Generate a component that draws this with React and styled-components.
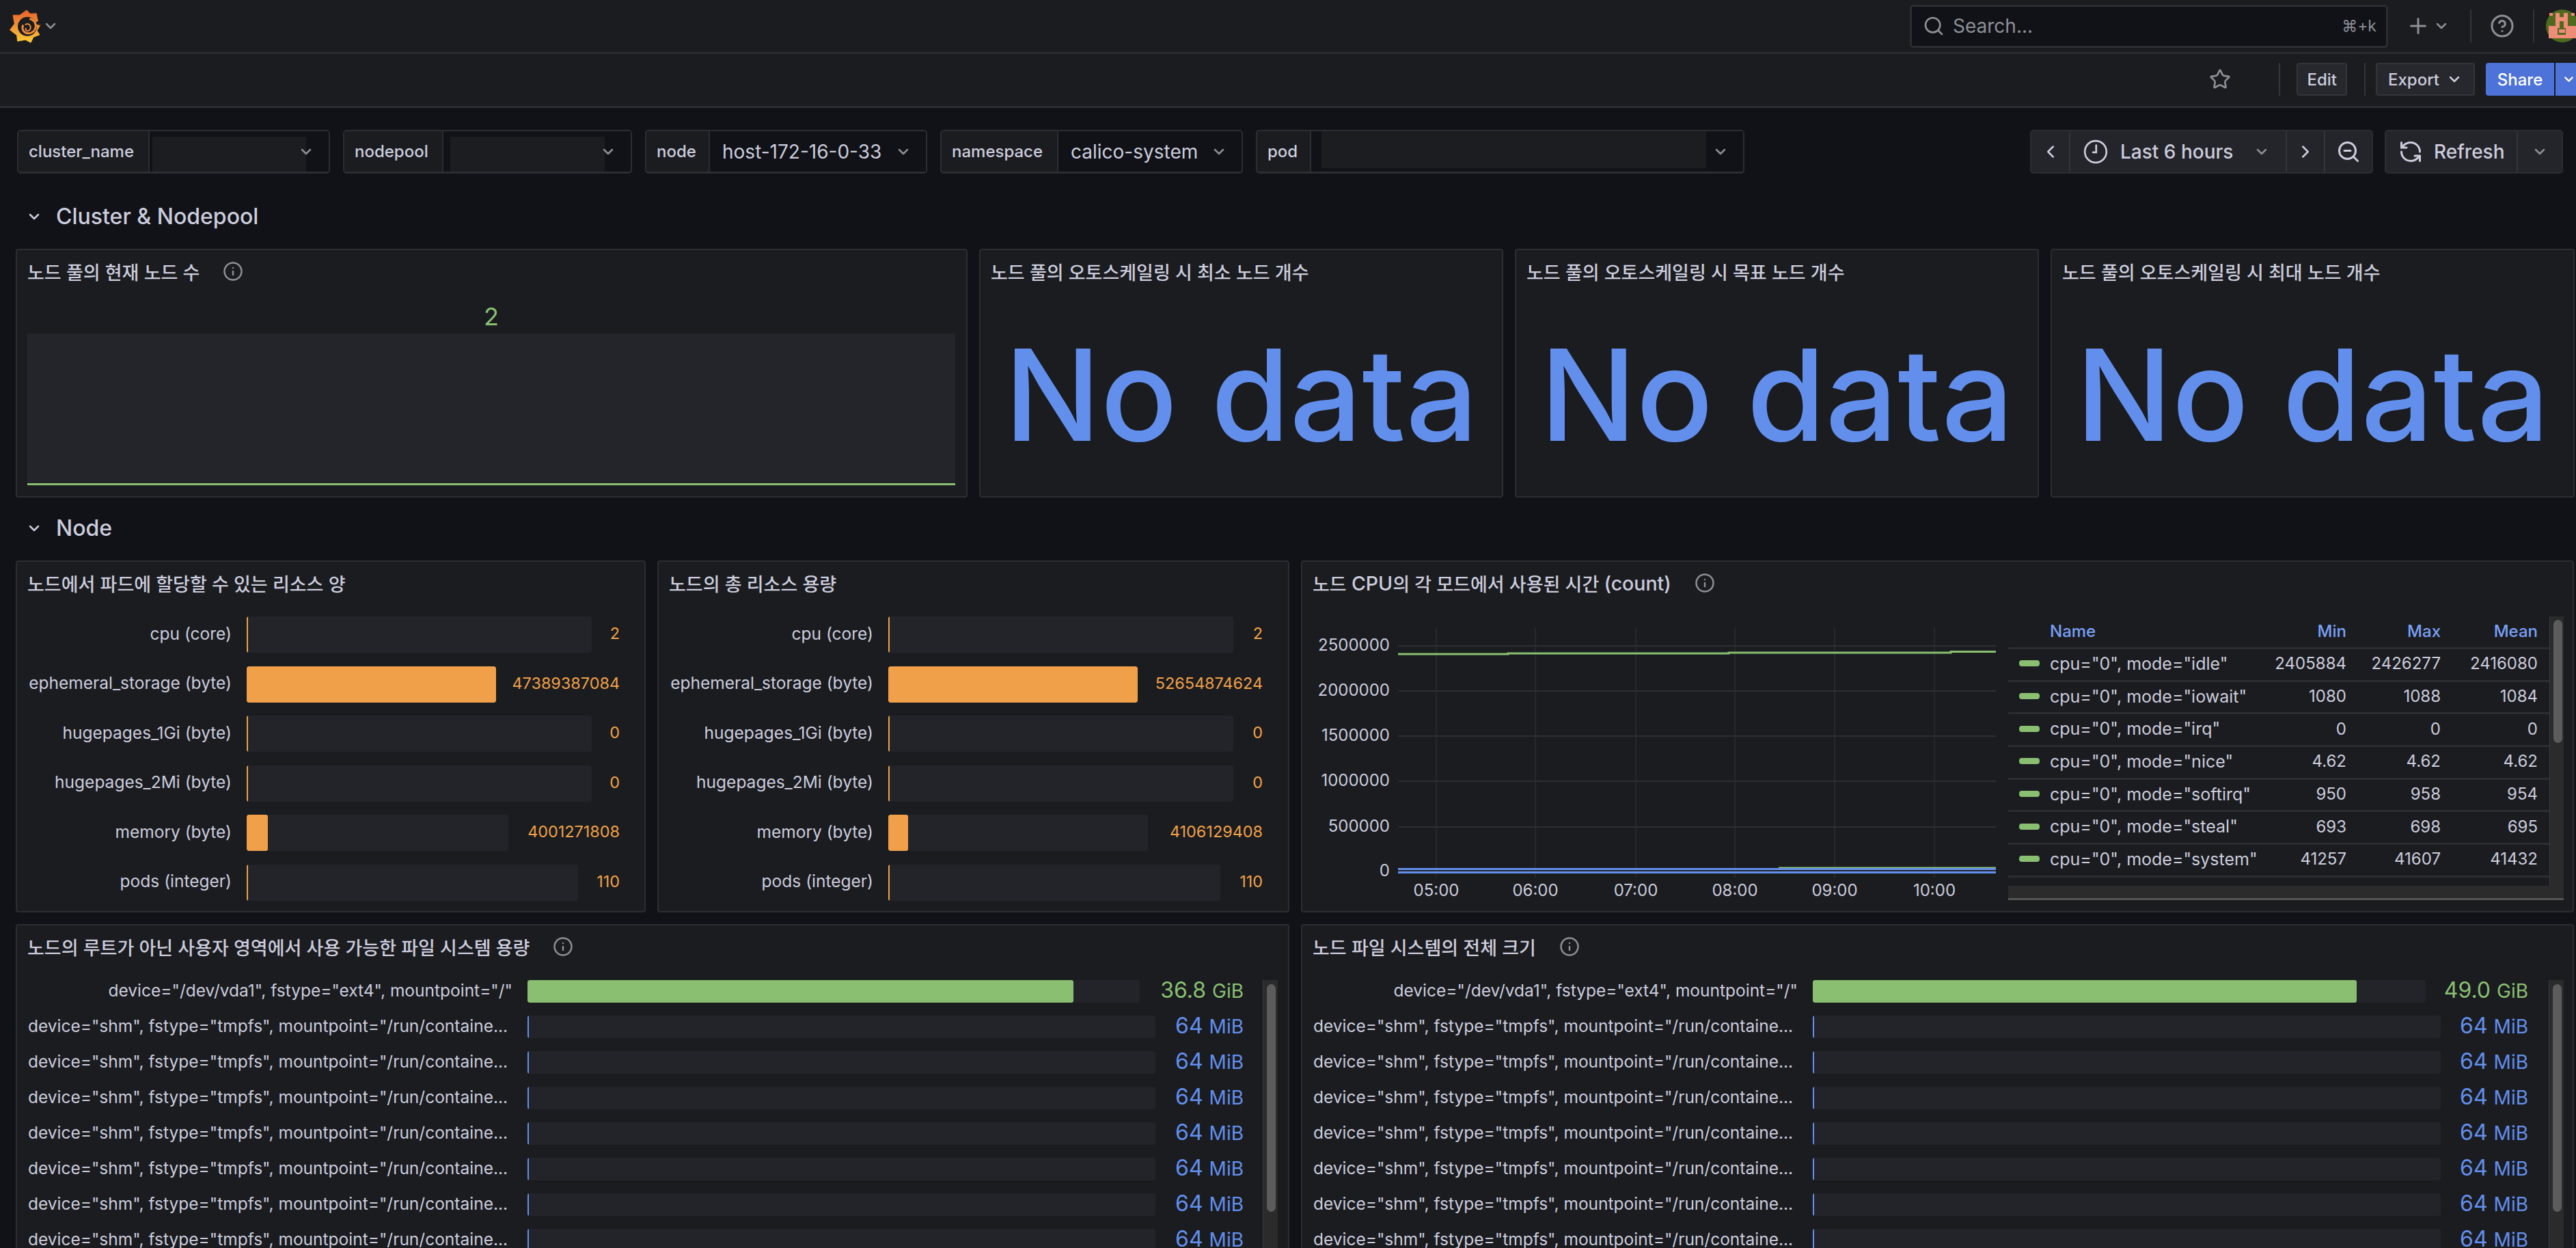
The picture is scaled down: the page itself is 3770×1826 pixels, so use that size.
import React from "react";
import styled, { createGlobalStyle } from "styled-components";
import {
  ChevronDown,
  ChevronLeft,
  ChevronRight,
  CircleHelp,
  Info,
  Plus,
  RefreshCcw,
  Search,
  Star,
  ZoomOut,
} from "lucide-react";

const text = "#ccccdc";
const muted = "#8e8e96";
const line = "#2b2d32";
const panelBg = "#1a1c20";
const canvas = "#101217";
const orange = "#f0a048";
const green = "#8abf72";
const blue = "#638fec";

const GlobalStyle = createGlobalStyle`
  html, body {
    margin: 0;
    background: ${canvas};
    overflow: hidden;
  }
  * {
    box-sizing: border-box;
  }
  body {
    font-family: Inter, "Noto Sans CJK KR", "DejaVu Sans", sans-serif;
    color: ${text};
  }
`;

const Page = styled.div`
  width: 3770px;
  height: 1826px;
  overflow: hidden;
`;

const TopNav = styled.header`
  height: 79px;
  display: flex;
  align-items: center;
  background: ${panelBg};
  border-bottom: 3px solid ${line};
  padding-left: 14px;
`;

const Caret = styled(ChevronDown)`
  color: ${(p) => p.$color || muted};
  flex-shrink: 0;
`;

const LogoCaret = styled(Caret)`
  margin-left: 2px;
`;

const SelectCaret = styled(Caret)`
  margin-left: auto;
`;

const SearchBox = styled.div`
  width: 700px;
  height: 63px;
  margin-left: auto;
  display: flex;
  align-items: center;
  background: ${canvas};
  border: 3px solid ${line};
  border-radius: 5px;
  padding: 0 14px 0 16px;
  color: ${muted};
  font-size: 28px;
`;

const SearchHint = styled.span`
  margin-left: auto;
  font-size: 23px;
`;

const SearchLabel = styled.span`
  margin-left: 12px;
`;

const NavIcons = styled.div`
  display: flex;
  align-items: center;
  color: ${muted};
  margin-right: -4px;
`;

const AddIcon = styled(Plus)`
  margin-left: 26px;
`;

const AddCaret = styled(Caret)`
  margin-left: 4px;
`;

const VDivider = styled.span`
  width: 2px;
  height: 48px;
  background: #33353a;
  margin-left: ${(p) => p.$left}px;
  margin-right: ${(p) => p.$right}px;
  flex-shrink: 0;
`;

const Toolbar = styled.div`
  height: 79px;
  display: flex;
  align-items: center;
  justify-content: flex-end;
  background: ${panelBg};
  border-bottom: 3px solid ${line};
  padding-bottom: 2px;
  color: ${muted};
`;

const ToolButton = styled.button`
  height: 48px;
  display: flex;
  align-items: center;
  gap: 10px;
  padding: 0 ${(p) => p.$pad || 18}px;
  font: 500 24px Inter, sans-serif;
  color: ${text};
  background: #26282d;
  border: 2px solid #33353a;
  border-radius: 4px;
`;

const ShareButton = styled.button`
  height: 48px;
  width: 100px;
  margin-left: 16px;
  font: 500 24px Inter, sans-serif;
  color: #fff;
  background: #4d72d8;
  border: none;
  border-radius: 4px 0 0 4px;
`;

const ShareCaret = styled.button`
  height: 48px;
  width: 30px;
  margin-left: 2px;
  padding: 0 0 0 9px;
  display: flex;
  align-items: center;
  color: #fff;
  background: #4d72d8;
  border: none;
`;

const Filters = styled.div`
  display: flex;
  align-items: center;
  height: 64px;
  margin-top: 32px;
  padding: 0 19px 0 25px;
`;

const Variable = styled.div`
  height: 64px;
  width: ${(p) => p.$width}px;
  margin-right: 19px;
  display: flex;
  border: 2px solid ${line};
  border-bottom-width: 3px;
  border-radius: 5px;
  overflow: hidden;
`;

const VarLabel = styled.label`
  width: ${(p) => p.$width}px;
  display: flex;
  align-items: center;
  padding-left: 15px;
  flex-shrink: 0;
  font-size: 24px;
  font-weight: 500;
  background: ${panelBg};
  border-right: 2px solid ${line};
`;

const VarSelect = styled.div`
  flex: 1;
  display: flex;
  align-items: center;
  justify-content: space-between;
  padding: 0 21px 0 18px;
  background: ${canvas};
  font-size: 28px;
  white-space: nowrap;
`;

const EmptySelect = styled.div`
  flex: 1;
  display: flex;
  align-items: center;
  background: ${canvas};
  padding-right: 21px;
`;

const EmptyValue = styled.div`
  width: ${(p) => p.$width}px;
  height: 54px;
  flex-shrink: 0;
  margin: ${(p) => p.$top}px -20px 0 ${(p) => p.$left}px;
  align-self: flex-start;
  background: #1b1d21;
`;

const TimeControls = styled.div`
  margin-left: auto;
  display: flex;
`;

const ButtonGroup = styled.div`
  display: flex;
  height: 64px;
  margin-left: ${(p) => p.$gap || 0}px;
  background: #23252a;
  border: 2px solid ${line};
  border-radius: 5px;
`;

const GroupCell = styled.div`
  width: ${(p) => p.$width}px;
  display: flex;
  align-items: center;
  justify-content: ${(p) => (p.$spread ? "flex-start" : "center")};
  padding-left: ${(p) => (p.$spread ? 18 : 0)}px;
  border-left: ${(p) => (p.$first ? "none" : `2px solid #33353a`)};
  font-size: 28px;
  font-weight: 500;
`;

const TimeLabel = styled.span`
  margin: 0 30px 0 17px;
  white-space: nowrap;
`;

const RefreshLabel = styled.span`
  margin-left: 16px;
`;

const ClockIcon = () => (
  <svg width="38" height="38" viewBox="0 0 24 24" fill="none" stroke="currentColor" strokeWidth="1.7" strokeLinecap="round">
    <circle cx="12" cy="12" r="10" />
    <path d="M12.5 6v6.5H9.5" />
  </svg>
);

const SectionRow = styled.div`
  height: 92px;
  margin-top: ${(p) => p.$top}px;
  padding: 0 0 3px 38px;
  display: flex;
  align-items: center;
  gap: 20px;
  font-size: 32px;
  font-weight: 500;
`;

const PanelGrid = styled.div`
  display: grid;
  grid-template-columns: ${(p) => p.$columns};
  gap: 17px;
  padding-left: 23px;
  margin-bottom: 17px;
`;

const Panel = styled.section`
  height: ${(p) => p.$height}px;
  display: flex;
  flex-direction: column;
  background: ${panelBg};
  border: 2px solid ${line};
  border-radius: 4px;
`;

const PanelTitle = styled.h2`
  height: 66px;
  margin: 0;
  flex-shrink: 0;
  padding: 0 0 4px 15px;
  display: flex;
  align-items: center;
  font-size: 27px;
  font-weight: 500;
  white-space: pre;
`;

const TitleLatin = styled.span`
  font-size: 28.5px;
`;

const InfoIcon = styled(Info)`
  color: ${muted};
  margin-left: 34px;
`;

const StatBody = styled.div`
  flex: 1;
  display: flex;
  flex-direction: column;
  align-items: stretch;
  padding: 0 16px 14px 15px;
`;

const StatValue = styled.div`
  height: 56px;
  padding-top: 5px;
  display: flex;
  align-items: center;
  justify-content: center;
  font-size: 36px;
  color: ${green};
`;

const Sparkline = styled.div`
  flex: 1;
  background: #23252a;
  border-bottom: 3px solid ${green};
  margin-bottom: 2px;
`;

const NoData = styled.div`
  flex: 1;
  display: flex;
  align-items: center;
  justify-content: center;
  font-size: 186px;
  font-weight: 500;
  color: ${blue};
  white-space: nowrap;
  padding-bottom: 4px;
`;

const GaugeList = styled.div`
  margin-top: 14px;
  display: flex;
  flex-direction: column;
  gap: ${(p) => p.$gap}px;
  padding-left: 15px;
  flex: 1;
  min-width: 0;
`;

const GaugeRow = styled.div`
  height: ${(p) => p.$height}px;
  display: flex;
  align-items: center;
  flex-shrink: 0;
  padding-right: ${(p) => p.$right}px;
`;

const GaugeLabel = styled.div`
  width: ${(p) => p.$width}px;
  flex-shrink: 0;
  text-align: right;
  font-size: 24.5px;
  padding-bottom: 4px;
  overflow: hidden;
  white-space: nowrap;
`;

const Track = styled.div`
  height: 100%;
  margin-left: 22px;
  flex-shrink: 0;
  background: #22242a;
  border-radius: 3px;
  overflow: hidden;
`;

const Fill = styled.div`
  height: 100%;
  border-radius: 3px;
  background: ${(p) => p.$color};
`;

const GaugeValue = styled.div`
  flex: 1;
  text-align: right;
  white-space: nowrap;
  padding-bottom: 4px;
  font-size: ${(p) => p.$size}px;
  color: ${(p) => p.$color};
`;

const Unit = styled.span`
  font-size: 28px;
`;

const ChartBody = styled.div`
  margin-top: 14px;
  display: flex;
  flex: 1;
  min-height: 0;
`;

const Chart = styled.svg`
  width: 1033px;
  height: 428px;
  flex-shrink: 0;
  text {
    font: 24px Inter, sans-serif;
    fill: ${text};
  }
`;

const LegendBox = styled.div`
  width: 813px;
  height: 415px;
  display: grid;
  grid-template-columns: 792px 21px;
  grid-template-rows: 394px 21px;
`;

const LegendTable = styled.div`
  overflow: hidden;
  font-size: 24px;
`;

const LegendLine = styled.div`
  height: ${(p) => p.$height}px;
  display: grid;
  grid-template-columns: 61px 314px 120px 138px 142px 17px;
  align-items: center;
  padding-bottom: 3px;
  border-bottom: 3px solid ${line};
  white-space: nowrap;
  color: ${(p) => p.$color || text};
  font-weight: ${(p) => p.$weight || 400};
`;

const Marker = styled.i`
  display: block;
  width: 30px;
  height: 9px;
  margin-left: 16px;
  border-radius: 4px;
  background: ${green};
`;

const SeriesName = styled.span`
  font-size: 25px;
`;

const NumCell = styled.span`
  text-align: right;
`;

const ScrollTrack = styled.div`
  background: #2b2b2b;
  padding: ${(p) => p.$pad};
  border-left: 1px solid #3a3a3a;
  flex-shrink: 0;
`;

const ScrollThumb = styled.div`
  width: 13px;
  height: ${(p) => p.$height}px;
  margin-left: 5px;
  background: #5c5c5c;
  border-radius: 7px;
`;

const HorizontalTrack = styled.div`
  grid-column: 1 / 3;
  background: #2b2b2b;
  border-bottom: 3px solid #555;
`;

const ScrollArea = styled.div`
  display: flex;
  flex: 1;
  min-height: 0;
  padding-right: ${(p) => p.$right}px;
`;

const FsScroll = styled(ScrollTrack)`
  width: 22px;
  margin-top: 14px;
`;

const Logo = () => (
  <svg width="46" height="49" viewBox="40 38 138 146">
    <defs>
      <linearGradient id="grafana" x1="0" y1="0" x2="0" y2="1">
        <stop offset="0" stopColor="#e8602e" />
        <stop offset="1" stopColor="#fbca36" />
      </linearGradient>
    </defs>
    <path
      d="M115 40L130 56L158 55L162 80L175 105L160 130L172 148L145 158L133 182L110 170L75 176L72 150L42 127L62 100L55 62L85 62Z"
      fill="url(#grafana)"
      stroke="url(#grafana)"
      strokeWidth="3"
      strokeLinejoin="round"
    />
    <circle cx="118" cy="112" r="42" fill={panelBg} />
    <path d="M150 98L176 108L170 84Z" fill={panelBg} />
    <path d="M128 78C165 84 165 140 122 142C100 142 92 120 100 105" fill="none" stroke="#ee8a38" strokeWidth="9" />
    <path d="M108 104C125 90 144 118 124 130C114 134 108 126 112 118" fill="none" stroke="#ee8a38" strokeWidth="6" />
  </svg>
);

const Avatar = () => (
  <svg width="48" height="48" viewBox="0 0 48 48">
    <circle cx="24" cy="24" r="24" fill="#4f6a1f" />
    <g fill="#ee8c78">
      <rect x="5" y="5" width="5" height="4" />
      <rect x="37" y="5" width="5" height="4" />
      <rect x="14" y="5" width="6" height="22" />
      <rect x="26" y="5" width="6" height="22" />
      <rect x="14" y="11" width="18" height="6" />
      <rect x="4" y="24" width="13" height="18" />
      <rect x="29" y="24" width="15" height="18" />
      <rect x="19" y="29" width="9" height="5" />
      <rect x="14" y="37" width="18" height="5" />
    </g>
  </svg>
);

const allocatable = [
  { name: "cpu (core)", value: "2", track: 505, fill: 2 },
  { name: "ephemeral_storage (byte)", value: "47389387084", track: 365, fill: 365 },
  { name: "hugepages_1Gi (byte)", value: "0", track: 505, fill: 2 },
  { name: "hugepages_2Mi (byte)", value: "0", track: 505, fill: 2 },
  { name: "memory (byte)", value: "4001271808", track: 383, fill: 31 },
  { name: "pods (integer)", value: "110", track: 485, fill: 2 },
];

const capacity = [
  { name: "cpu (core)", value: "2", track: 505, fill: 2 },
  { name: "ephemeral_storage (byte)", value: "52654874624", track: 365, fill: 365 },
  { name: "hugepages_1Gi (byte)", value: "0", track: 505, fill: 2 },
  { name: "hugepages_2Mi (byte)", value: "0", track: 505, fill: 2 },
  { name: "memory (byte)", value: "4106129408", track: 380, fill: 29 },
  { name: "pods (integer)", value: "110", track: 486, fill: 2 },
];

const legend = [
  ['cpu="0", mode="idle"', "2405884", "2426277", "2416080"],
  ['cpu="0", mode="iowait"', "1080", "1088", "1084"],
  ['cpu="0", mode="irq"', "0", "0", "0"],
  ['cpu="0", mode="nice"', "4.62", "4.62", "4.62"],
  ['cpu="0", mode="softirq"', "950", "958", "954"],
  ['cpu="0", mode="steal"', "693", "698", "695"],
  ['cpu="0", mode="system"', "41257", "41607", "41432"],
];

const shmLabel = 'device="shm", fstype="tmpfs", mountpoint="/run/containe...';
const yTicks = [
  ["2500000", 43],
  ["2000000", 109],
  ["1500000", 175],
  ["1000000", 241],
  ["500000", 308],
  ["0", 373],
];
const xTicks = [
  ["05:00", 196],
  ["06:00", 341],
  ["07:00", 488],
  ["08:00", 633],
  ["09:00", 779],
  ["10:00", 925],
];

function ResourcePanel({ title, rows, right }) {
  return (
    <Panel $height={515}>
      <PanelTitle>{title}</PanelTitle>
      <GaugeList $gap={19.6}>
        {rows.map((row) => (
          <GaugeRow key={row.name} $height={53} $right={right}>
            <GaugeLabel $width={299}>{row.name}</GaugeLabel>
            <Track style={{ width: row.track }}>
              <Fill $color={orange} style={{ width: row.fill }} />
            </Track>
            <GaugeValue $size={23.4} $color={orange}>{row.value}</GaugeValue>
          </GaugeRow>
        ))}
      </GaugeList>
    </Panel>
  );
}

function FsPanel({ title, value, firstTrack, firstFill, right, scrollRight }) {
  const shm = Array.from({ length: 7 }, (_, i) => i);
  return (
    <Panel $height={500}>
      <PanelTitle>
        {title}
        <InfoIcon size={30} />
      </PanelTitle>
      <ScrollArea $right={scrollRight}>
        <GaugeList $gap={19}>
          <GaugeRow $height={33} $right={right}>
            <GaugeLabel $width={710}>device="/dev/vda1", fstype="ext4", mountpoint="/"</GaugeLabel>
            <Track style={{ width: firstTrack }}>
              <Fill $color={green} style={{ width: firstFill }} />
            </Track>
            <GaugeValue $size={32} $color={green}>
              {value} <Unit>GiB</Unit>
            </GaugeValue>
          </GaugeRow>
          {shm.map((i) => (
            <GaugeRow key={i} $height={33} $right={right}>
              <GaugeLabel $width={710}>{shmLabel}&nbsp;</GaugeLabel>
              <Track style={{ width: 919 }}>
                <Fill $color={blue} style={{ width: 2 }} />
              </Track>
              <GaugeValue $size={32} $color={blue}>
                64 <Unit>MiB</Unit>
              </GaugeValue>
            </GaugeRow>
          ))}
        </GaugeList>
        <FsScroll $pad="6px 0 0">
          <ScrollThumb $height={333} />
        </FsScroll>
      </ScrollArea>
    </Panel>
  );
}

export default function App() {
  return (
    <Page>
      <GlobalStyle />
      <TopNav>
        <Logo />
        <LogoCaret size={24} strokeWidth={2.5} />
        <SearchBox>
          <Search size={32} strokeWidth={2} />
          <SearchLabel>Search...</SearchLabel>
          <SearchHint>⌘+k</SearchHint>
        </SearchBox>
        <NavIcons>
          <AddIcon size={36} strokeWidth={2} />
          <AddCaret size={24} strokeWidth={2.5} />
          <VDivider $left={30} $right={27} />
          <CircleHelp size={36} strokeWidth={2} />
          <VDivider $left={27} $right={17} />
          <Avatar />
        </NavIcons>
      </TopNav>
      <Toolbar>
        <Star size={32} strokeWidth={2} />
        <VDivider $left={70} $right={24} />
        <ToolButton $pad={13}>Edit</ToolButton>
        <VDivider $left={25} $right={15} />
        <ToolButton $pad={16}>
          Export
          <Caret size={24} strokeWidth={2.5} $color={text} />
        </ToolButton>
        <ShareButton>Share</ShareButton>
        <ShareCaret>
          <ChevronDown size={24} strokeWidth={2.5} />
        </ShareCaret>
      </Toolbar>

      <Filters>
        <Variable $width={458}>
          <VarLabel $width={192}>cluster_name</VarLabel>
          <EmptySelect>
            <EmptyValue $width={225} $left={4} $top={8} />
            <SelectCaret size={24} strokeWidth={2.5} />
          </EmptySelect>
        </Variable>
        <Variable $width={423}>
          <VarLabel $width={145}>nodepool</VarLabel>
          <EmptySelect>
            <EmptyValue $width={226} $left={10} $top={8} />
            <SelectCaret size={24} strokeWidth={2.5} />
          </EmptySelect>
        </Variable>
        <Variable $width={413}>
          <VarLabel $width={93}>node</VarLabel>
          <VarSelect>
            host-172-16-0-33
            <Caret size={24} strokeWidth={2.5} />
          </VarSelect>
        </Variable>
        <Variable $width={443}>
          <VarLabel $width={171}>namespace</VarLabel>
          <VarSelect>
            calico-system
            <Caret size={24} strokeWidth={2.5} />
          </VarSelect>
        </Variable>
        <Variable $width={715}>
          <VarLabel $width={79}>pod</VarLabel>
          <EmptySelect>
            <EmptyValue $width={563} $left={15} $top={0} />
            <SelectCaret size={24} strokeWidth={2.5} />
          </EmptySelect>
        </Variable>
        <TimeControls>
          <ButtonGroup>
            <GroupCell $first $width={55}>
              <ChevronLeft size={30} strokeWidth={2} />
            </GroupCell>
            <GroupCell $spread $width={317}>
              <ClockIcon />
              <TimeLabel>Last 6 hours</TimeLabel>
              <Caret size={24} strokeWidth={2.5} />
            </GroupCell>
            <GroupCell $width={56}>
              <ChevronRight size={30} strokeWidth={2} />
            </GroupCell>
            <GroupCell $width={70}>
              <ZoomOut size={36} strokeWidth={2} />
            </GroupCell>
          </ButtonGroup>
          <ButtonGroup $gap={17}>
            <GroupCell $first $spread $width={191}>
              <RefreshCcw size={36} strokeWidth={2} />
              <RefreshLabel>Refresh</RefreshLabel>
            </GroupCell>
            <GroupCell $width={66}>
              <Caret size={24} strokeWidth={2.5} />
            </GroupCell>
          </ButtonGroup>
        </TimeControls>
      </Filters>

      <SectionRow $top={18}>
        <Caret size={24} strokeWidth={2.5} $color={text} />
        Cluster &amp; Nodepool
      </SectionRow>
      <PanelGrid $columns="1393px 767px 767px 767px">
        <Panel $height={364}>
          <PanelTitle>
            노드 풀의 현재 노드 수
            <InfoIcon size={30} />
          </PanelTitle>
          <StatBody>
            <StatValue>2</StatValue>
            <Sparkline />
          </StatBody>
        </Panel>
        <Panel $height={364}>
          <PanelTitle>노드 풀의 오토스케일링 시 최소 노드 개수</PanelTitle>
          <NoData>No data</NoData>
        </Panel>
        <Panel $height={364}>
          <PanelTitle>노드 풀의 오토스케일링 시 목표 노드 개수</PanelTitle>
          <NoData>No data</NoData>
        </Panel>
        <Panel $height={364}>
          <PanelTitle>노드 풀의 오토스케일링 시 최대 노드 개수</PanelTitle>
          <NoData>No data</NoData>
        </Panel>
      </PanelGrid>

      <SectionRow $top={-17}>
        <Caret size={24} strokeWidth={2.5} $color={text} />
        Node
      </SectionRow>
      <PanelGrid $columns="922px 925px 1863px">
        <ResourcePanel title="노드에서 파드에 할당할 수 있는 리소스 양" rows={allocatable} right={36} />
        <ResourcePanel title="노드의 총 리소스 용량" rows={capacity} right={37} />
        <Panel $height={515}>
          <PanelTitle>
            노드 <TitleLatin>CPU</TitleLatin>의 각 모드에서 사용된 시간 <TitleLatin>(count)</TitleLatin>
            <InfoIcon size={30} />
          </PanelTitle>
          <ChartBody>
            <Chart viewBox="0 0 1033 428">
              {xTicks.map(([label, x]) => (
                <line key={label} x1={x} x2={x} y1="16" y2="382" stroke="#26282c" strokeWidth="2" />
              ))}
              {yTicks.map(([label, y]) => (
                <line key={label} x1="140" x2="1015" y1={y} y2={y} stroke="#2c2e32" strokeWidth="2" />
              ))}
              <path d="M140 55H301V54H624V53H949V51.5H1015" fill="none" stroke={green} strokeWidth="3" />
              <path d="M697 368H1015" stroke={green} strokeWidth="3" />
              <path d="M140 369.5H1015M140 374.5H1015" stroke={blue} strokeWidth="3" />
              {yTicks.map(([label, y]) => (
                <text key={label} x="128" y={y} textAnchor="end" dominantBaseline="middle">
                  {label}
                </text>
              ))}
              {xTicks.map(([label, x]) => (
                <text key={label} x={x} y="402" textAnchor="middle" dominantBaseline="middle">
                  {label}
                </text>
              ))}
            </Chart>
            <LegendBox>
              <LegendTable>
                <LegendLine $height={48} $color="#7aa0f5" $weight={500}>
                  <span />
                  <span>Name</span>
                  <NumCell>Min</NumCell>
                  <NumCell>Max</NumCell>
                  <NumCell>Mean</NumCell>
                </LegendLine>
                {legend.map(([name, min, max, mean]) => (
                  <LegendLine key={name} $height={47.7}>
                    <Marker />
                    <SeriesName>{name}</SeriesName>
                    <NumCell>{min}</NumCell>
                    <NumCell>{max}</NumCell>
                    <NumCell>{mean}</NumCell>
                  </LegendLine>
                ))}
              </LegendTable>
              <ScrollTrack $pad="5px 0 0">
                <ScrollThumb $height={180} />
              </ScrollTrack>
              <HorizontalTrack />
            </LegendBox>
          </ChartBody>
        </Panel>
      </PanelGrid>

      <PanelGrid $columns="1864px 1863px">
        <FsPanel
          title="노드의 루트가 아닌 사용자 영역에서 사용 가능한 파일 시스템 용량"
          value="36.8"
          firstTrack={896}
          firstFill={799}
          right={28}
          scrollRight={15}
        />
        <FsPanel
          title="노드 파일 시스템의 전체 크기"
          value="49.0"
          firstTrack={897}
          firstFill={796}
          right={30}
          scrollRight={13}
        />
      </PanelGrid>
    </Page>
  );
}
